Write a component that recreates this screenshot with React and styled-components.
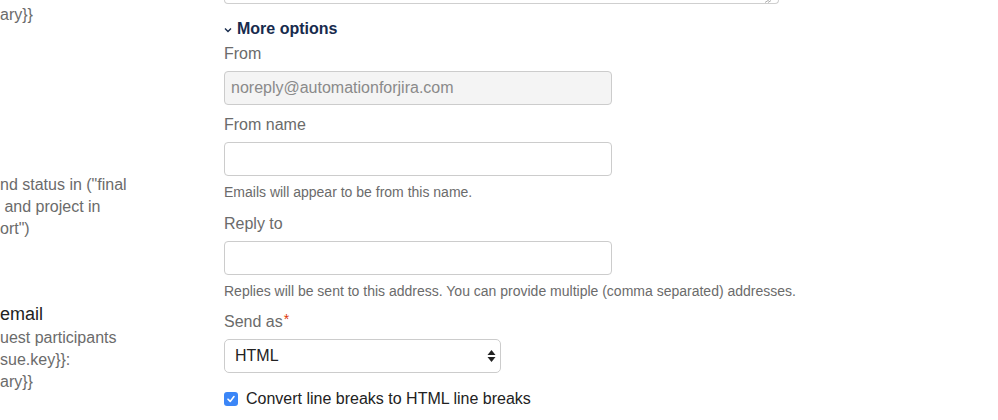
import React from "react";
import styled, { createGlobalStyle } from "styled-components";

const GlobalStyle = createGlobalStyle`
  html, body {
    margin: 0;
    padding: 0;
    background: #ffffff;
  }
  body {
    font-family: "Liberation Sans", Arial, sans-serif;
    -webkit-font-smoothing: antialiased;
  }
`;

const leftTop = ["ary}}"];
const leftMiddle = ['nd status in ("final', "\u00a0and project in", 'ort")'];
const leftBottom = ["uest participants", "sue.key}}:", "ary}}"];

const App = () => {
  return (
    <>
      <GlobalStyle />
      <Page>
        <LeftCol>
          <Snippet top={4}>
            {leftTop.map((line) => (
              <Line key={line}>{line}</Line>
            ))}
          </Snippet>
          <Snippet top={148}>
            {leftMiddle.map((line) => (
              <Line key={line}>{line}</Line>
            ))}
          </Snippet>
          <Snippet top={61}>
            <Heading>email</Heading>
            {leftBottom.map((line) => (
              <Line key={line}>{line}</Line>
            ))}
          </Snippet>
        </LeftCol>

        <Form>
          <TextareaEdge>
            <Grip width="8" height="5" viewBox="0 0 8 5">
              <path d="M1 4.5L7 0.5M4 4.5L7 2.5" stroke="#999" strokeWidth="0.8" />
            </Grip>
          </TextareaEdge>

          <Toggle>
            <Chevron width="8" height="6" viewBox="0 0 8 6">
              <path d="M1 1.5L4 4.5L7 1.5" fill="none" stroke="#172b4d" strokeWidth="1.4" />
            </Chevron>
            More options
          </Toggle>

          <Label top={5}>From</Label>
          <Input disabled value="noreply@automationforjira.com" readOnly />

          <Label top={10}>From name</Label>
          <Input />
          <Help>Emails will appear to be from this name.</Help>

          <Label top={13}>Reply to</Label>
          <Input />
          <Help>
            Replies will be sent to this address. You can provide multiple
            (comma separated) addresses.
          </Help>

          <Label top={12}>
            Send as<Required>*</Required>
          </Label>
          <Select>
            HTML
            <svg width="9" height="14" viewBox="0 0 9 14">
              <path d="M4.5 1L8.5 6H0.5Z" fill="#222" />
              <path d="M4.5 13L8.5 8H0.5Z" fill="#222" />
            </svg>
          </Select>

          <CheckRow>
            <CheckBox>
              <svg width="10" height="10" viewBox="0 0 10 10">
                <path
                  d="M2 5.2L4.2 7.4L8 2.6"
                  fill="none"
                  stroke="#fff"
                  strokeWidth="1.6"
                  strokeLinecap="round"
                  strokeLinejoin="round"
                />
              </svg>
            </CheckBox>
            Convert line breaks to HTML line breaks
          </CheckRow>
        </Form>
      </Page>
    </>
  );
};

// styles
const Page = styled.div`
  display: flex;
  width: 998px;
  height: 420px;
  overflow: hidden;
`;

const LeftCol = styled.div`
  width: 224px;
  flex-shrink: 0;
  display: flex;
  flex-direction: column;
  overflow: hidden;
`;

const Snippet = styled.div`
  margin-top: ${(props) => props.top}px;
  display: flex;
  flex-direction: column;
  white-space: nowrap;
`;

const Line = styled.div`
  font-size: 16px;
  line-height: 22px;
  color: #6b6b6b;
`;

const Heading = styled.div`
  font-size: 18px;
  line-height: 26px;
  color: #222;
`;

const Form = styled.div`
  width: 600px;
  display: flex;
  flex-direction: column;
  align-items: flex-start;
`;

const TextareaEdge = styled.div`
  width: 547px;
  height: 3px;
  border: 1px solid #cfcfcf;
  border-top: none;
  border-radius: 0 0 4px 4px;
  display: flex;
  justify-content: flex-end;
  align-items: flex-end;
  padding-right: 6px;
  box-sizing: content-box;
`;

const Grip = styled.svg`
  display: block;
`;

const Toggle = styled.div`
  margin-top: 15px;
  display: flex;
  align-items: center;
  gap: 5px;
  font-size: 16px;
  line-height: 20px;
  font-weight: bold;
  color: #172b4d;
`;

const Chevron = styled.svg`
  display: block;
  margin-top: 2px;
`;

const Label = styled.div`
  margin-top: ${(props) => props.top}px;
  margin-bottom: 7px;
  font-size: 16px;
  line-height: 20px;
  color: #6b6b6b;
`;

const Required = styled.span`
  color: #de350b;
  font-size: 14px;
  vertical-align: top;
  position: relative;
  top: -3px;
  margin-left: 1px;
`;

const Input = styled.input`
  box-sizing: border-box;
  width: 388px;
  height: 34px;
  margin: 0;
  padding: 0 6px;
  border: 1px solid #cccccc;
  border-radius: 4px;
  background: ${(props) => (props.disabled ? "#f4f4f4" : "#ffffff")};
  font-family: "Liberation Sans", Arial, sans-serif;
  font-size: 16px;
  color: #8a8a8a;
  outline: none;
`;

const Help = styled.div`
  margin-top: 7px;
  font-size: 14px;
  line-height: 18px;
  color: #6b6b6b;
  white-space: nowrap;
`;

const Select = styled.div`
  box-sizing: border-box;
  width: 277px;
  height: 34px;
  padding: 0 4px 0 10px;
  border: 1px solid #cccccc;
  border-radius: 5px;
  display: flex;
  align-items: center;
  justify-content: space-between;
  font-size: 16px;
  color: #222;
`;

const CheckRow = styled.div`
  margin-top: 16px;
  display: flex;
  align-items: center;
  gap: 8px;
  font-size: 16px;
  line-height: 20px;
  color: #222;
`;

const CheckBox = styled.span`
  width: 14px;
  height: 14px;
  border-radius: 3px;
  background: #3b86f7;
  display: flex;
  align-items: center;
  justify-content: center;
`;

export default App;
